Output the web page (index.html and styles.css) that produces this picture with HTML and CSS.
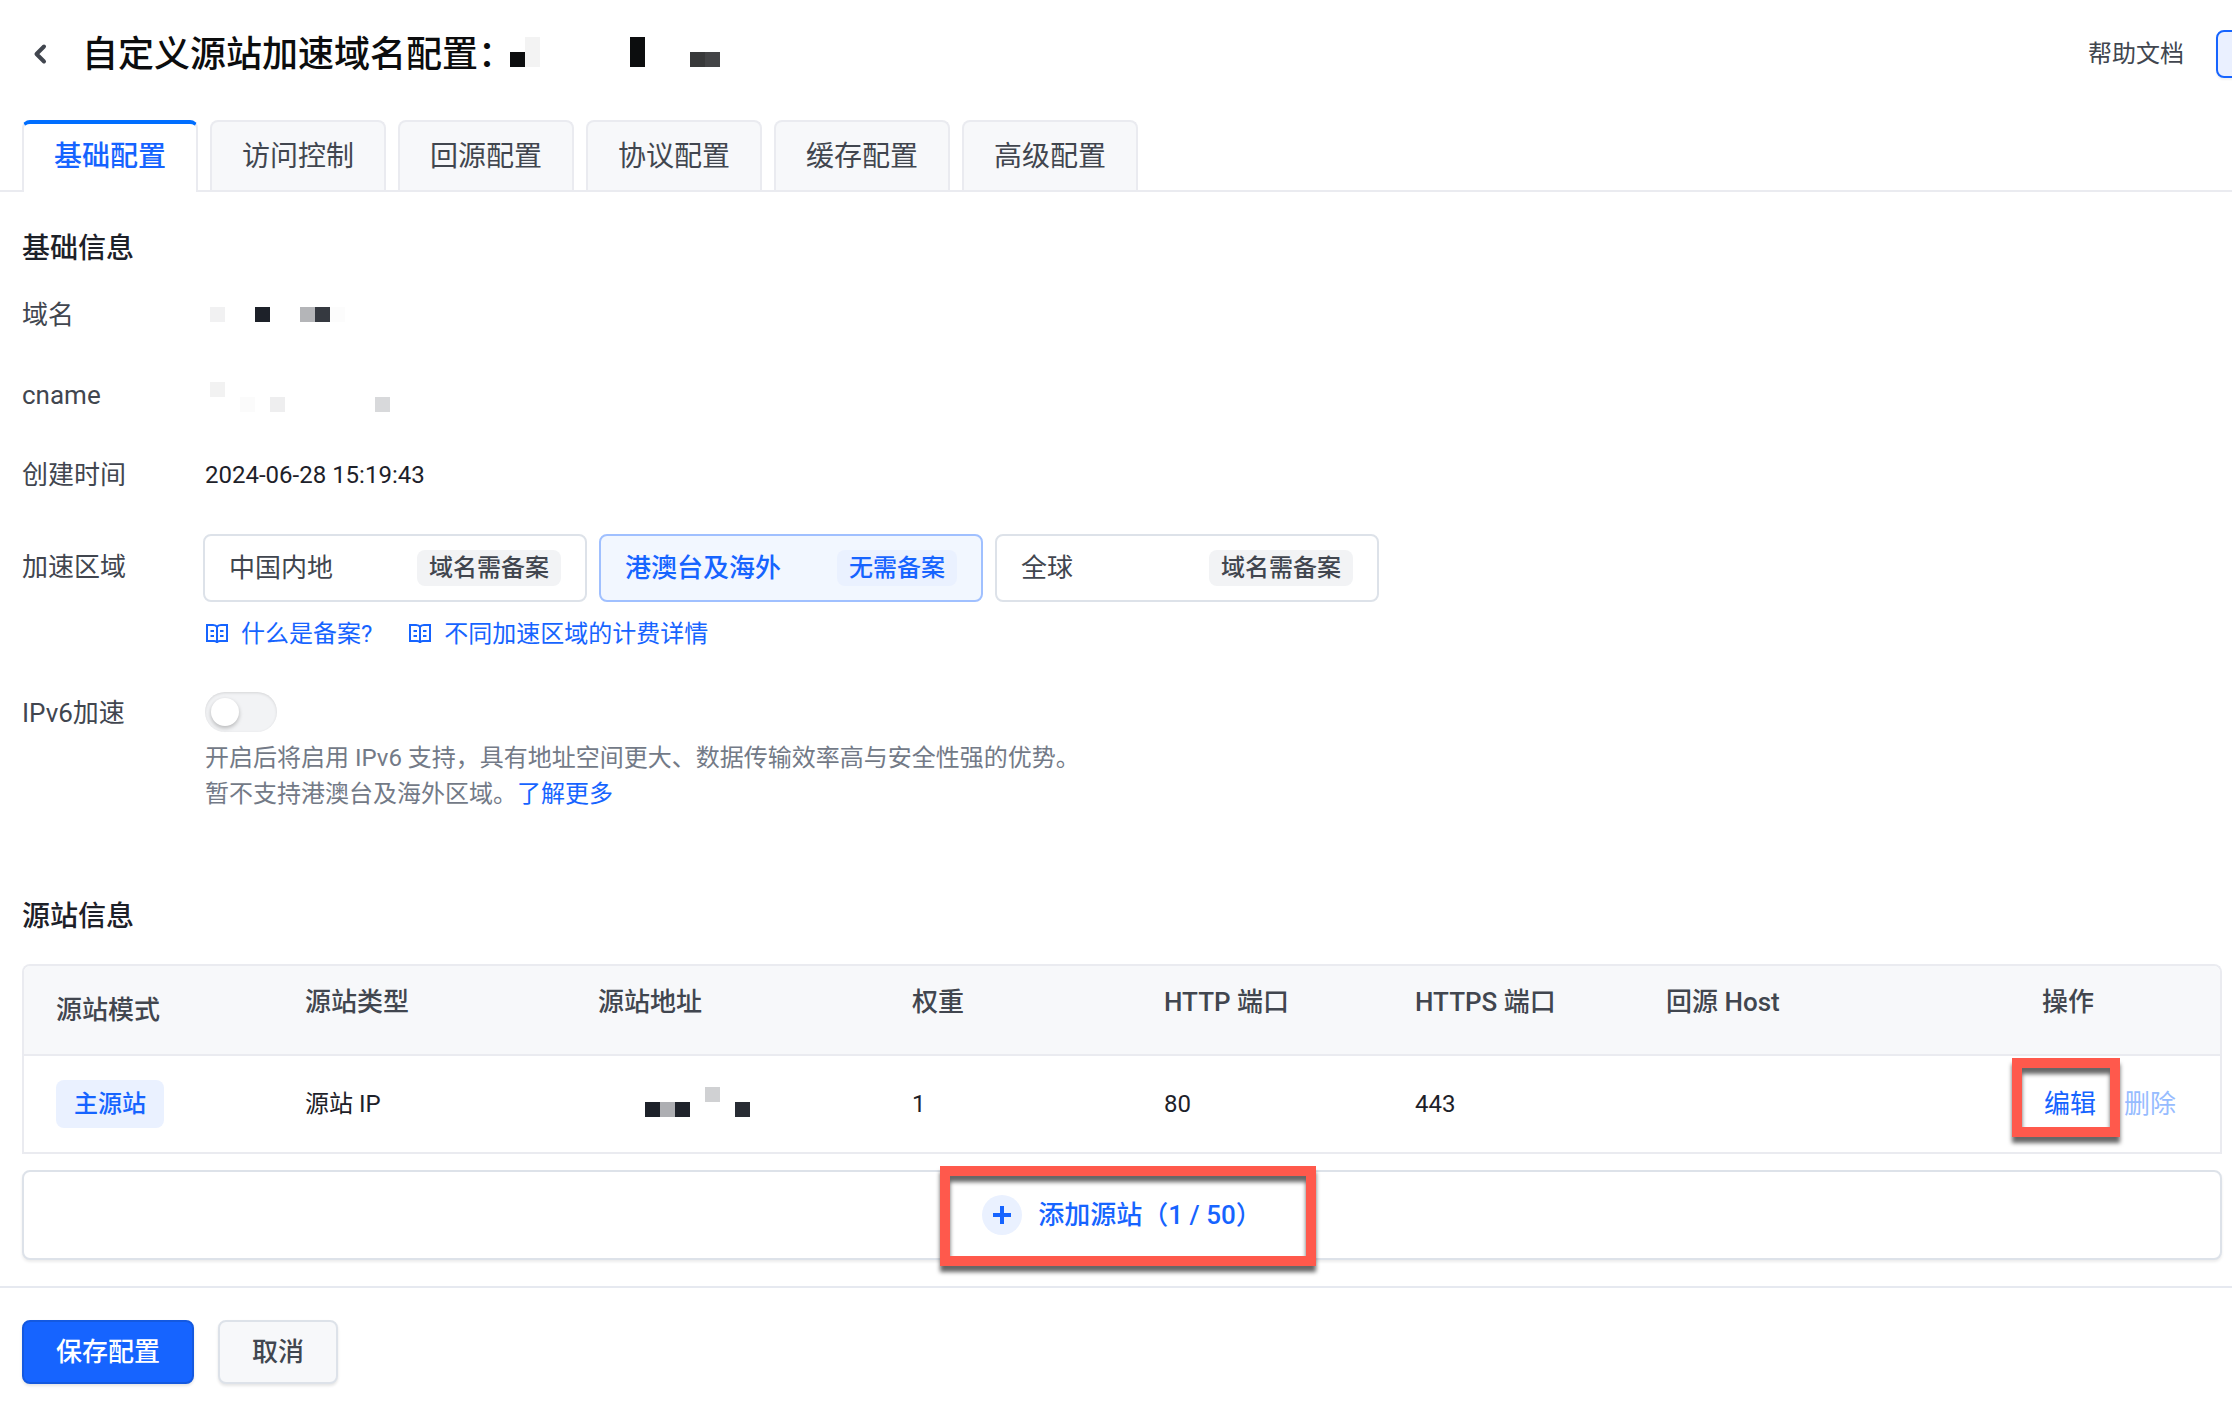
FILE: index.html
```html
<!DOCTYPE html>
<html lang="zh-CN">
<head>
<meta charset="utf-8">
<meta name="viewport" content="width=device-width, initial-scale=1">
<title>自定义源站加速域名配置</title>
<link rel="stylesheet" href="styles.css">
</head>
<body>
<div class="page">
  <header class="header">
    <button class="back" type="button" aria-label="返回">
      <svg width="16" height="24" viewBox="0 0 16 24" fill="none" stroke="#41464f" stroke-width="4" stroke-linecap="round" stroke-linejoin="round"><path d="M12 4.500L4.500 12L12 19.500"/></svg>
    </button>
    <h1 class="title">自定义源站加速域名配置：</h1>
    <svg class="title-mask" width="210" height="30" shape-rendering="crispEdges" aria-hidden="true">
      <rect x="0" y="15" width="15" height="15" fill="#0c0d0e"/>
      <rect x="15" y="0" width="15" height="30" fill="#f3f3f3"/>
      <rect x="120" y="0" width="15" height="30" fill="#0c0d0e"/>
      <rect x="180" y="15" width="15" height="15" fill="#38393a"/>
      <rect x="195" y="15" width="15" height="15" fill="#434446"/>
    </svg>
    <a class="help" href="#help">帮助文档</a>
    <button class="header-action" type="button" aria-label="更多"></button>
  </header>

  <nav class="tabs" role="tablist">
    <button class="tab tab-active" type="button" role="tab" aria-selected="true">基础配置</button>
    <button class="tab" type="button" role="tab">访问控制</button>
    <button class="tab" type="button" role="tab">回源配置</button>
    <button class="tab" type="button" role="tab">协议配置</button>
    <button class="tab" type="button" role="tab">缓存配置</button>
    <button class="tab" type="button" role="tab">高级配置</button>
  </nav>

  <main class="content">
    <section class="basic">
      <h2 class="heading">基础信息</h2>
      <div class="fields">
        <div class="field">
          <span class="label">域名</span>
          <div class="value">
            <svg class="mask" width="140" height="15" shape-rendering="crispEdges" aria-hidden="true">
              <rect x="5" width="15" height="15" fill="#f1f1f2"/>
              <rect x="50" width="15" height="15" fill="#1d2129"/>
              <rect x="95" width="15" height="15" fill="#b4b5b8"/>
              <rect x="110" width="15" height="15" fill="#353940"/>
              <rect x="125" width="15" height="15" fill="#fcfcfc"/>
            </svg>
          </div>
        </div>
        <div class="field">
          <span class="label">cname</span>
          <div class="value">
            <svg class="mask mask-tall" width="185" height="30" shape-rendering="crispEdges" aria-hidden="true">
              <rect x="5" width="15" height="15" fill="#f2f2f2"/>
              <rect x="35" y="15" width="15" height="15" fill="#fbfbfb"/>
              <rect x="65" y="15" width="15" height="15" fill="#eeeeef"/>
              <rect x="170" y="15" width="15" height="15" fill="#d8d9db"/>
            </svg>
          </div>
        </div>
        <div class="field">
          <span class="label">创建时间</span>
          <div class="value">2024-06-28 15:19:43</div>
        </div>
        <div class="field">
          <span class="label label-region" id="region-label">加速区域</span>
          <div class="value value-region">
            <div class="regions" role="radiogroup" aria-labelledby="region-label">
              <label class="region"><input class="region-input" type="radio" name="region"><span>中国内地</span><span class="badge">域名需备案</span></label>
              <label class="region"><input class="region-input" type="radio" name="region" checked><span>港澳台及海外</span><span class="badge">无需备案</span></label>
              <label class="region"><input class="region-input" type="radio" name="region"><span>全球</span><span class="badge">域名需备案</span></label>
            </div>
            <div class="doc-links">
              <a class="doc-link" href="#record">
                <svg width="24" height="24" viewBox="0 0 24 24" fill="none" stroke="currentColor" stroke-width="2"><path d="M12 5C11 3 10 3 8 3H2v16h7c2 0 3 .5 3 2c0-1.500 1-2 3-2h7V3h-6c-2 0-3 0-4 2zM12 5v16M5.500 9h3.500M5.500 14h3.500M15 9h3.500M15 14h3.500"/></svg>什么是备案?</a>
              <a class="doc-link" href="#billing">
                <svg width="24" height="24" viewBox="0 0 24 24" fill="none" stroke="currentColor" stroke-width="2"><path d="M12 5C11 3 10 3 8 3H2v16h7c2 0 3 .5 3 2c0-1.500 1-2 3-2h7V3h-6c-2 0-3 0-4 2zM12 5v16M5.500 9h3.500M5.500 14h3.500M15 9h3.500M15 14h3.500"/></svg>不同加速区域的计费详情</a>
            </div>
          </div>
        </div>
        <div class="field">
          <label class="label" for="ipv6">IPv6加速</label>
          <div class="value">
            <input class="switch" type="checkbox" id="ipv6" role="switch">
            <p class="hint">开启后将启用 IPv6 支持，具有地址空间更大、数据传输效率高与安全性强的优势。<br>暂不支持港澳台及海外区域。<a class="link" href="#ipv6-more">了解更多</a></p>
          </div>
        </div>
      </div>
    </section>

    <section class="origin">
      <h2 class="heading">源站信息</h2>
      <table class="table">
        <colgroup>
          <col class="col-mode"><col class="col-type"><col class="col-address"><col class="col-weight"><col class="col-port"><col class="col-port"><col class="col-host"><col class="col-action">
        </colgroup>
        <thead>
          <tr><th class="th-mode">源站模式</th><th>源站类型</th><th>源站地址</th><th>权重</th><th>HTTP 端口</th><th>HTTPS 端口</th><th>回源 Host</th><th>操作</th></tr>
        </thead>
        <tbody>
          <tr>
            <td><span class="tag">主源站</span></td>
            <td>源站 IP</td>
            <td>
              <svg class="address-mask" width="105" height="30" shape-rendering="crispEdges" aria-hidden="true">
                <rect x="0" y="15" width="15" height="15" fill="#1d2129"/>
                <rect x="15" y="15" width="15" height="15" fill="#adaeb2"/>
                <rect x="30" y="15" width="15" height="15" fill="#1f232b"/>
                <rect x="60" y="0" width="15" height="15" fill="#d0d1d3"/>
                <rect x="90" y="15" width="15" height="15" fill="#282c33"/>
              </svg>
            </td>
            <td>1</td>
            <td>80</td>
            <td>443</td>
            <td></td>
            <td>
              <div class="actions">
                <span class="marked"><button class="text-button" type="button">编辑</button><span class="mark mark-edit"></span></span>
                <button class="text-button" type="button" disabled>删除</button>
              </div>
            </td>
          </tr>
        </tbody>
      </table>
      <button class="add" type="button">
        <span class="marked add-inner">
          <span class="plus"><svg width="20" height="20" viewBox="0 0 20 20" stroke="currentColor" stroke-width="4" aria-hidden="true"><path d="M10 1v18M1 10h18"/></svg></span>
          <span>添加源站（1 / 50）</span>
          <span class="mark mark-add"></span>
        </span>
      </button>
    </section>
  </main>

  <footer class="footer">
    <button class="button button-primary" type="button">保存配置</button>
    <button class="button" type="button">取消</button>
  </footer>
</div>
</body>
</html>
```
FILE: styles.css
```css
:root {
  --blue: #1664ff;
  --text: #1d2129;
  --text-soft: #41464f;
  --line: #eaebf0;
  --line-strong: #dde2e9;
  --fill: #f7f8fa;
}

* {
  box-sizing: border-box;
}

body {
  margin: 0;
  background: #fff;
  color: var(--text);
  font: 24px/40px Roboto, "Noto Sans CJK SC", sans-serif;
}

button {
  font: inherit;
  cursor: pointer;
}

h1,
h2,
p {
  margin: 0;
}

a {
  color: var(--blue);
  text-decoration: none;
}

svg {
  display: block;
  flex: none;
}

.page {
  overflow: hidden;
}

.header {
  display: flex;
  align-items: center;
  height: 120px;
  padding: 0 0 12px 32px;
}

.back {
  display: flex;
  padding: 0;
  margin-right: 34px;
  border: 0;
  background: none;
}

.title {
  padding-top: 2px;
  color: #0c0d0e;
  font-size: 36px;
  font-weight: 500;
  line-height: 48px;
}

.title-mask {
  margin: 0 auto 4px -4px;
}

.help {
  margin-right: 32px;
  color: var(--text-soft);
}

.header-action {
  flex: none;
  width: 120px;
  height: 48px;
  margin-right: -104px;
  border: 2px solid var(--blue);
  border-radius: 8px;
  background: #eaf0ff;
  box-shadow: 0 2px 2px rgba(0, 0, 0, 0.06);
}

.tabs {
  display: flex;
  gap: 12px;
  padding: 0 22px;
  border-bottom: 2px solid var(--line);
}

.tab {
  height: 70px;
  padding: 2px 30px 0;
  border: 2px solid var(--line);
  border-bottom: 0;
  border-radius: 8px 8px 0 0;
  background: var(--fill);
  color: var(--text-soft);
  font-size: 28px;
}

.tab-active {
  height: 72px;
  margin-bottom: -2px;
  padding-bottom: 4px;
  border-top: 4px solid #006eff;
  background: #fff;
  color: var(--blue);
  font-weight: 500;
}

.content {
  padding: 37px 10px 26px 22px;
}

.heading {
  font-size: 28px;
  font-weight: 500;
}

.fields {
  display: flex;
  flex-direction: column;
  gap: 38px;
  margin-top: 25px;
}

.field {
  display: flex;
  line-height: 42px;
}

.label {
  flex: none;
  width: 183px;
  color: var(--text-soft);
  font-size: 26px;
}

.label-region {
  width: 181px;
  padding-top: 12px;
}

.mask {
  margin-top: 13px;
}

.mask-tall {
  margin-top: 8px;
}

.regions {
  display: flex;
  gap: 12px;
}

.region {
  display: flex;
  align-items: center;
  justify-content: space-between;
  width: 384px;
  height: 68px;
  padding: 0 24px;
  border: 2px solid var(--line-strong);
  border-radius: 8px;
  color: var(--text-soft);
  font-size: 26px;
  cursor: pointer;
}

.region-input {
  position: absolute;
  opacity: 0;
}

.badge {
  padding: 0 12px;
  border-radius: 8px;
  background: #f2f3f5;
  font-size: 24px;
  font-weight: 500;
  line-height: 36px;
}

.region:has(:checked) {
  border-color: #a0c0ff;
  background: #f2f7ff;
  color: var(--blue);
  font-weight: 500;
}

.region:has(:checked) .badge {
  background: #eaf1ff;
}

.doc-links {
  display: flex;
  gap: 36px;
  margin-top: 12px;
  padding-left: 2px;
  line-height: 40px;
}

.doc-link {
  display: flex;
  align-items: center;
  gap: 12px;
}

.switch {
  display: block;
  appearance: none;
  width: 72px;
  height: 40px;
  margin: 0;
  padding: 6px;
  border-radius: 20px;
  background: #f2f3f5;
  box-shadow: inset 0 1px 3px rgba(0, 0, 0, 0.12);
  cursor: pointer;
}

.switch::before {
  display: block;
  width: 28px;
  height: 28px;
  border-radius: 50%;
  background: #fff;
  box-shadow: 0 2px 4px rgba(0, 0, 0, 0.25);
  content: "";
}

.switch:checked {
  background: var(--blue);
}

.switch:checked::before {
  margin-left: auto;
}

.hint {
  margin-top: 8px;
  color: #737a87;
  line-height: 36px;
}

.origin {
  margin-top: 85px;
}

.table {
  width: 100%;
  margin-top: 27px;
  border: 2px solid var(--line);
  border-bottom: 0;
  border-radius: 8px 8px 0 0;
  border-spacing: 0;
  table-layout: fixed;
}

.table th,
.table td {
  padding: 0 0 0 32px;
  border-bottom: 2px solid var(--line);
  text-align: left;
}

.table th {
  height: 90px;
  padding-top: 16px;
  background: var(--fill);
  color: var(--text-soft);
  font-size: 26px;
  font-weight: 500;
  vertical-align: top;
}

.table .th-mode {
  padding-top: 0;
  vertical-align: middle;
  border-top-left-radius: 6px;
}

.table th:last-child {
  border-top-right-radius: 6px;
}

.table td {
  height: 98px;
}

.col-mode {
  width: 249px;
}

.col-type {
  width: 293px;
}

.col-address {
  width: 314px;
}

.col-weight {
  width: 252px;
}

.col-port {
  width: 251px;
}

.col-host {
  width: 376px;
}

.col-action {
  width: 210px;
}

.tag {
  display: inline-block;
  padding: 4px 18px;
  border-radius: 8px;
  background: #eaf1ff;
  color: var(--blue);
  font-weight: 500;
}

.address-mask {
  margin: 0 0 4px 47px;
}

.actions {
  display: flex;
  gap: 28px;
  padding-left: 2px;
}

.text-button {
  padding: 0;
  border: 0;
  background: none;
  color: var(--blue);
  font-size: 26px;
}

.text-button:disabled {
  color: #97bcff;
  cursor: default;
}

.marked {
  position: relative;
}

.mark {
  position: absolute;
  border: 10px solid #ff594c;
  filter: drop-shadow(0 6px 2px rgba(0, 0, 0, 0.6));
  pointer-events: none;
}

.mark-edit {
  inset: -26px -24px -12px -32px;
}

.mark-add {
  inset: -29px -54px -31px -42px;
}

.add {
  display: flex;
  align-items: center;
  justify-content: center;
  width: 100%;
  height: 90px;
  margin-top: 16px;
  border: 2px solid var(--line-strong);
  border-radius: 8px;
  background: #fff;
  box-shadow: 0 2px 3px rgba(0, 0, 0, 0.08);
  color: var(--blue);
  font-size: 26px;
  font-weight: 500;
}

.add-inner {
  display: flex;
  gap: 16px;
}

.plus {
  display: grid;
  place-items: center;
  width: 40px;
  height: 40px;
  border-radius: 50%;
  background: #eaf1ff;
}

.footer {
  display: flex;
  gap: 24px;
  padding: 32px 22px 18px;
  border-top: 2px solid #e6e9f0;
}

.button {
  height: 64px;
  padding: 0 32px;
  border: 2px solid var(--line-strong);
  border-radius: 8px;
  background: var(--fill);
  box-shadow: 0 2px 3px rgba(0, 0, 0, 0.1);
  color: var(--text-soft);
  font-size: 26px;
  font-weight: 500;
}

.button-primary {
  border-color: #1459e0;
  background: var(--blue);
  color: #fff;
}
```
